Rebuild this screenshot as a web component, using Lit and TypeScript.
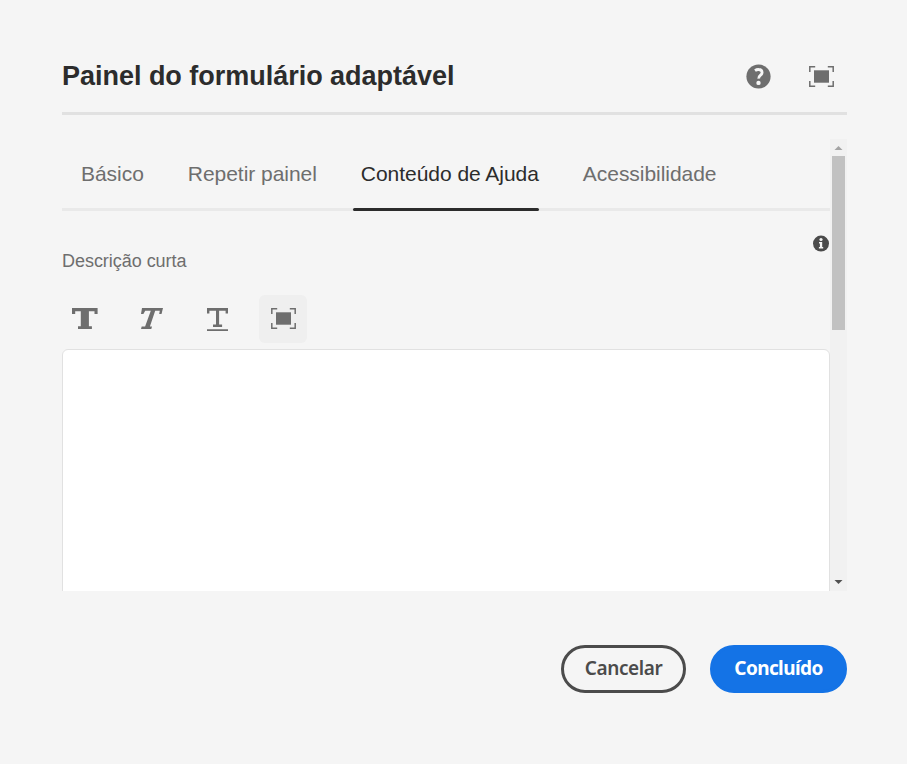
import { LitElement, html, css, svg } from "lit";
import { customElement, state } from "lit/decorators.js";

const fullscreenIcon = svg`
  <path d="M.8 6V.8h5.4M18.8.8h5.4V6M24.2 15v5.2h-5.4M6.2 20.2H.8V15" fill="none" stroke="currentColor" stroke-width="1.5"/>
  <rect x="5" y="4.3" width="15" height="12.4" fill="currentColor"/>`;

@customElement("app-root")
export class AppRoot extends LitElement {
  @state() private active = 2;

  private tabs = ["Básico", "Repetir painel", "Conteúdo de Ajuda", "Acessibilidade"];

  static styles = css`
    :host {
      display: block;
      box-sizing: border-box;
      height: 764px;
      padding: 52px 60px 0 62px;
      background: #f5f5f5;
      color: #6e6e6e;
      font-family: "Liberation Sans", Arial, sans-serif;
      overflow: hidden;
    }
    svg { display: block; }
    button {
      font: inherit;
      color: inherit;
      border: 0;
      background: none;
      padding: 0;
      margin: 0;
    }
    .header {
      display: flex;
      height: 60px;
      border-bottom: 3px solid #e1e1e1;
    }
    h1 {
      margin: 0;
      flex: 1;
      font-size: 27px;
      line-height: 48px;
      font-weight: 700;
      letter-spacing: -0.02px;
      color: #2c2c2c;
      white-space: nowrap;
    }
    .header-action {
      width: 48px;
      height: 48px;
      display: grid;
      place-items: center;
      margin-left: 15px;
    }
    .header-action:last-child { margin-right: 2px; }
    .header-action svg { margin-top: 1px; }
    .viewport {
      display: flex;
      height: 452px;
      margin-top: 24px;
      overflow: hidden;
    }
    .content {
      width: 768px;
      flex: none;
    }
    .tabs {
      display: flex;
      gap: 28px;
      height: 72px;
      box-sizing: border-box;
      padding-left: 11px;
      box-shadow: inset 0 -3px #e9e9e9;
    }
    .tab {
      box-sizing: border-box;
      height: 72px;
      padding: 0 0 3px 8px;
      margin-right: 8px;
      font-size: 21px;
      letter-spacing: -0.04px;
      line-height: 69px;
      white-space: nowrap;
      position: relative;
    }
    .tab.active { color: #2c2c2c; }
    .tab.active::after {
      content: "";
      position: absolute;
      left: 0;
      right: 0;
      bottom: 0;
      height: 3px;
      border-radius: 1.5px;
      background: #2c2c2c;
    }
    .info {
      display: flex;
      justify-content: flex-end;
      height: 17px;
      padding-top: 24px;
      margin-right: 1px;
      color: #4b4b4b;
    }
    .label {
      font-size: 18px;
      line-height: 24px;
      letter-spacing: -0.04px;
      margin-top: -3px;
    }
    .toolbar {
      display: flex;
      gap: 18px;
      height: 48px;
      margin: 22px 0 6px -1px;
    }
    .tool {
      box-sizing: border-box;
      width: 48px;
      height: 48px;
      display: flex;
      justify-content: center;
      align-items: flex-start;
      padding-top: 13px;
      border-radius: 6px;
    }
    .tool.shaded {
      background: #efefef;
      padding-left: 1px;
    }
    .editor {
      height: 300px;
      box-sizing: border-box;
      border: 1px solid #e1e1e1;
      border-radius: 6px;
      background: #fff;
    }
    .scrollbar {
      width: 17px;
      display: flex;
      flex-direction: column;
      align-items: center;
      background: #f1f1f1;
    }
    .arrow {
      height: 17px;
      width: 17px;
      flex: none;
    }
    .thumb {
      width: 13px;
      height: 174px;
      background: #c1c1c1;
    }
    .track { flex: 1; }
    .footer {
      display: flex;
      justify-content: flex-end;
      gap: 24px;
      margin-top: 54px;
    }
    .btn {
      box-sizing: border-box;
      height: 48px;
      border-radius: 24px;
      font-family: "Noto Sans", sans-serif;
      font-weight: 600;
      font-size: 19px;
      line-height: 40px;
      text-align: center;
      white-space: nowrap;
    }
    .secondary {
      width: 125px;
      border: 3px solid #4b4b4b;
      color: #4b4b4b;
      letter-spacing: -0.4px;
    }
    .primary {
      width: 137px;
      border: 3px solid #1473e6;
      background: #1473e6;
      color: #fff;
      font-weight: 700;
      letter-spacing: -0.6px;
    }
    .btn span {
      display: block;
      height: 42px;
    }
  `;

  render() {
    return html`
      <div class="header">
        <h1>Painel do formulário adaptável</h1>
        <button class="header-action" aria-label="Ajuda">
          <svg width="25" height="25" viewBox="0 0 25 25">
            <circle cx="12.5" cy="12.5" r="12.1" fill="#6e6e6e"/>
            <path d="M9 6.6c1.1-.8 2.4-1.2 3.7-1.1 2.2.1 3.4 1.2 3.4 2.9 0 1.4-.8 2.1-1.8 2.9-1.3 1-1.8 1.6-1.6 3.4" fill="none" stroke="#f5f5f5" stroke-width="2.8"/>
            <circle cx="12.5" cy="18.9" r="2.2" fill="#f5f5f5"/>
          </svg>
        </button>
        <button class="header-action" aria-label="Tela cheia">
          <svg width="25" height="21" viewBox="0 0 25 21">${fullscreenIcon}</svg>
        </button>
      </div>
      <div class="viewport">
        <div class="content">
          <div class="tabs">
            ${this.tabs.map((t, i) => html`<button
              class="tab ${i === this.active ? "active" : ""}"
              @click=${() => (this.active = i)}>${t}</button>`)}
          </div>
          <div class="info">
            <svg width="16" height="17" viewBox="0 0 16 17">
              <circle cx="8" cy="8.6" r="8" fill="currentColor"/>
              <circle cx="8" cy="4.5" r="1.6" fill="#f5f5f5"/>
              <path d="M6 7h3.2v5H10.2v1.5H5.9V12h1V8.5H6z" fill="#f5f5f5"/>
            </svg>
          </div>
          <div class="label">Descrição curta</div>
          <div class="toolbar">
            <button class="tool" aria-label="Negrito">
              <svg width="26" height="21" viewBox="0 0 26 21" fill="currentColor">
                <path d="M0 0h25.6v6h-3.1V3.2h-5.6v15.1h3V21H6v-2.7h2.8V3.2H3.2V6H0z"/>
              </svg>
            </button>
            <button class="tool" aria-label="Itálico">
              <svg width="24" height="21" viewBox="0 0 24 21" fill="currentColor">
                <path d="M3 0h21l-1.5 6h-2.3l.6-3.2h-4.6L10.9 18.4h2.1l-.7 2.6H2l.7-2.6h3.4L11.8 2.8H6.2L4.4 6H2z"/>
              </svg>
            </button>
            <button class="tool" aria-label="Sublinhado">
              <svg width="21" height="23" viewBox="0 0 21 23" fill="currentColor">
                <path d="M0 0h21v5.4h-2.4V2.7h-6.5v13.8h3V19H6v-2.5h3V2.7H2.4v2.7H0zM0 21.3h21V23H0z"/>
              </svg>
            </button>
            <button class="tool shaded" aria-label="Tela cheia">
              <svg width="25" height="21" viewBox="0 0 25 21">${fullscreenIcon}</svg>
            </button>
          </div>
          <div class="editor"></div>
        </div>
        <div class="scrollbar">
          <svg class="arrow" viewBox="0 0 17 17"><path d="M4.5 11L8.5 7l4 4z" fill="#a3a3a3"/></svg>
          <div class="thumb"></div>
          <div class="track"></div>
          <svg class="arrow" viewBox="0 0 17 17"><path d="M4.5 6h8l-4 4z" fill="#505050"/></svg>
        </div>
      </div>
      <div class="footer">
        <button class="btn secondary"><span>Cancelar</span></button>
        <button class="btn primary"><span>Concluído</span></button>
      </div>
    `;
  }
}
